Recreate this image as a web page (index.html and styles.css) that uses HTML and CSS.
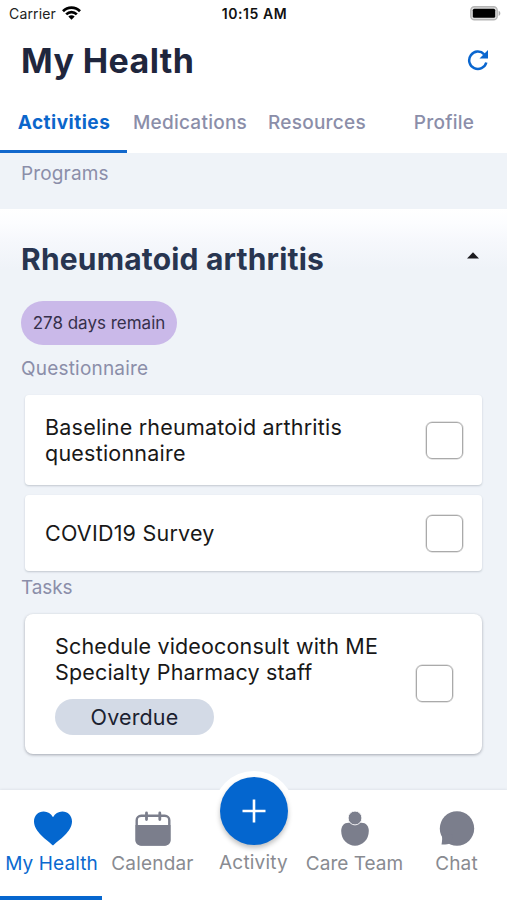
FILE: index.html
```html
<!DOCTYPE html>
<html lang="en">
<head>
<meta charset="utf-8">
<title>My Health</title>
<link rel="stylesheet" href="styles.css">
</head>
<body>
<div class="app">
  <div class="status">
    <div class="carrier"><span>Carrier</span>
      <svg width="19" height="14" viewBox="0 0 19 14" fill="none" stroke="#000" stroke-width="2.7"><path d="M1 5.200C5.800.3 13.200.3 18 5.200M4.200 8.400c3-3 7.600-3 10.600 0"/><path d="M6.300 10.600c1.800-1.700 4.600-1.700 6.400 0L9.500 13.700z" fill="#000" stroke="none"/></svg>
    </div>
    <span class="time">10:15 AM</span>
    <svg class="battery" width="31" height="15" viewBox="0 0 31 15"><rect x=".8" y=".8" width="26.400" height="13" rx="3.600" fill="#ddd" stroke="#b5b5b5" stroke-width="1.400"/><path d="M28.600 4.800c2.300 1 2.300 4.200 0 5.200z" fill="#aaa"/><rect x="2.800" y="2.800" width="22.400" height="9" rx="1.500"/></svg>
  </div>
  <header class="header">
    <h1>My Health</h1>
    <svg width="22" height="22" viewBox="0 0 22 22"><path d="M17.200 5.300A8.700 8.700 0 1 0 19.300 13.500" fill="none" stroke="#0a66cf" stroke-width="2.500"/><path d="M21 1v8.500h-8.500z" fill="#0a66cf"/></svg>
  </header>
  <nav class="tabs">
    <a class="tab active"><span>Activities</span></a>
    <a class="tab"><span>Medications</span></a>
    <a class="tab"><span>Resources</span></a>
    <a class="tab"><span>Profile</span></a>
  </nav>
  <main class="content">
    <div class="programs"><span>Programs</span></div>
    <section class="program">
      <div class="program-head">
        <h2>Rheumatoid arthritis</h2>
        <svg width="12" height="7" viewBox="0 0 12 7"><path d="M0 6.500 6 .3l6 6.200z" fill="#1c1b20"/></svg>
      </div>
      <div class="remain"><span>278 days remain</span></div>
      <h3 class="label questionnaire">Questionnaire</h3>
      <div class="card first"><p>Baseline rheumatoid arthritis<br>questionnaire</p><i class="check"></i></div>
      <div class="card second"><p>COVID19 Survey</p><i class="check"></i></div>
      <h3 class="label tasks">Tasks</h3>
      <div class="card task">
        <div><p>Schedule videoconsult with ME<br>Specialty Pharmacy staff</p><div class="overdue"><span>Overdue</span></div></div>
        <i class="check"></i>
      </div>
    </section>
  </main>
  <nav class="bottom">
    <a class="item active">
      <svg width="38" height="35" viewBox="0 0 38 35"><path d="M19 34.500C13 29 0 20.500 0 10.500 0 4.500 4.200.5 9.700.5c4 0 7.300 2.300 9.300 5.700C21 2.800 24.300.5 28.300.5 33.800.5 38 4.500 38 10.500c0 10-13 18.500-19 24z" fill="#0467cf"/></svg>
      <span>My Health</span>
    </a>
    <a class="item">
      <svg width="36" height="35" viewBox="0 0 36 35"><rect x="1.700" y="4.700" width="32.600" height="28.800" rx="4.500" fill="#fff" stroke="#7b7e8c" stroke-width="2.400"/><path d="M.5 14h35v15.500a5 5 0 0 1-5 5h-25a5 5 0 0 1-5-5z" fill="#7b7e8c"/><path d="M11.500 2v6.500M24.800 2v6.500" stroke="#7b7e8c" stroke-width="2.800" stroke-linecap="round"/></svg>
      <span>Calendar</span>
    </a>
    <a class="item add">
      <div class="halo"></div>
      <div class="fab"><svg width="24" height="24" viewBox="0 0 24 24"><path d="M12 .5v23M.5 12h23" stroke="#fff" stroke-width="2.600"/></svg></div>
      <span>Activity</span>
    </a>
    <a class="item care">
      <svg width="28" height="35" viewBox="0 0 28 35" fill="#7b7e8c"><path d="M7.500 11.800C3 11.800.2 15.300.2 20 .2 28.500 6.500 34.700 14 34.700S27.800 28.500 27.800 20c0-4.700-2.800-8.200-7.300-8.200z"/><circle cx="14" cy="7" r="6.900" stroke="#fff" stroke-width=".9"/></svg>
      <span>Care Team</span>
    </a>
    <a class="item">
      <svg width="36" height="35" viewBox="0 0 36 35"><circle cx="18" cy="17.500" r="17.200" fill="#7b7e8c"/><path d="M2.700 23.500C3.500 26.500 3.200 30 2.500 33.500c4 .1 7-.3 9.500-1.500l2-8z" fill="#7b7e8c"/></svg>
      <span>Chat</span>
    </a>
  </nav>
</div>
</body>
</html>
```
FILE: styles.css
```css
* { box-sizing: border-box; }
body { margin: 0; font-family: Inter, "Liberation Sans", sans-serif; }
h1, h2, h3, p { margin: 0; }
svg { display: block; flex: none; }
span, p, h1, h2, h3 { white-space: nowrap; }
.app { width: 507px; height: 900px; background: #fff; display: flex; flex-direction: column; overflow: hidden; }

.status { height: 28px; display: grid; grid-template-columns: 1fr auto 1fr; align-items: center; padding: 0 6px 1px 9px; font-size: 14px; color: #222; }
.carrier { display: flex; align-items: center; gap: 6px; letter-spacing: .15px; }
.carrier svg { margin-top: -1px; }
.time { font-weight: 600; font-size: 14px; letter-spacing: .55px; color: #111; margin-right: 1px; }
.battery { justify-self: end; margin-top: -1px; }

.header { height: 64px; display: flex; align-items: center; justify-content: space-between; padding: 2px 18px 0 21px; }
.header svg { margin-top: -3px; }
h1 { font-size: 34px; line-height: 40px; font-weight: 650; letter-spacing: .4px; color: #1f263d; }

.tabs { height: 61px; flex: none; display: grid; grid-template-columns: 127px 126px 128px 126px; }
.tab { display: flex; align-items: center; justify-content: center; padding: 3px 0 0 0; border-bottom: 3px solid transparent; font-size: 19px; font-weight: 500; color: #8b8ea9; letter-spacing: .25px; }
.tab.active { padding-left: 1px; color: #0b66cb; border-color: #1268cc; font-weight: 650; letter-spacing: .5px; }

.content { height: 637px; flex: none; background: #eff3f8; }
.programs { height: 56px; padding: 9px 21px; font-size: 19px; line-height: 24px; color: #8b8ea9; letter-spacing: .15px; }
.program { height: 581px; background: linear-gradient(#fff 0, #fcfdff 14px, #f6f8fc 32px, #eff3f8 60px); display: flex; flex-direction: column; padding: 0 25px 0 21px; }
.program-head { height: 92px; display: flex; align-items: center; justify-content: space-between; padding: 7px 3px 0 0; }
.program-head svg { margin-top: -6px; }
h2 { font-size: 30px; line-height: 36px; font-weight: 650; color: #283550; letter-spacing: .18px; }
.remain { width: 156px; height: 44px; border-radius: 22px; background: #cab9e9; color: #36304b; display: flex; align-items: center; justify-content: center; font-size: 17px; letter-spacing: 0; }
.label { font-size: 19px; line-height: 24px; font-weight: 400; color: #8b8ea9; letter-spacing: .2px; }
.questionnaire { margin-top: 12px; }
.tasks { margin-top: 5px; letter-spacing: -.1px; }
.card { margin-left: 4px; width: 457px; background: #fff; border-radius: 4px; box-shadow: 0 1px 2px rgba(60, 70, 90, .25); display: flex; justify-content: space-between; color: #181818; font-size: 21.500px; line-height: 26px; letter-spacing: .22px; }
.first { height: 90px; margin-top: 14px; padding: 19px 19px 0 20px; }
.first .check { margin-top: 8px; }
.second { height: 76px; margin-top: 10px; padding: 0 19px 0 20px; align-items: center; }
.task { height: 140px; margin-top: 14px; padding: 19px 29px 0 30px; border-radius: 8px; box-shadow: 0 1px 3px rgba(50, 55, 70, .4); letter-spacing: .16px; }
.task .check { margin-top: 32px; }
.check { width: 37px; height: 37px; flex: none; border: 1px solid #aaa; box-shadow: 0 0 0 .5px #ccc; border-radius: 6px; }
.overdue { width: 159px; height: 36px; margin-top: 14px; border-radius: 18px; background: #d3dae6; display: flex; align-items: center; justify-content: center; color: #1b2130; }

.bottom { position: relative; height: 110px; flex: none; display: grid; grid-template-columns: 102px 101px 101px 102px 101px; background: #fff; box-shadow: 0 -1px 2px rgba(100, 110, 130, .1); }
.item { display: flex; flex-direction: column; align-items: center; padding-top: 21px; font-size: 19px; line-height: 24px; color: #898b91; letter-spacing: .18px; }
.item > span { margin-top: 6px; }
.item.active { color: #0a69cf; padding-left: 4px; border-bottom: 4px solid #0667cf; letter-spacing: .1px; }
.item.active > span { margin-left: -3px; }
.item.add { position: relative; padding-top: 55px; letter-spacing: .2px; }
.item.care { padding-right: 1px; letter-spacing: .02px; }
.halo { position: absolute; top: -19px; left: 10px; width: 82px; height: 82px; border-radius: 50%; background: #fff; }
.fab { position: absolute; top: -13px; left: 17px; width: 68px; height: 68px; border-radius: 50%; background: #0466cf; box-shadow: 0 3px 5px rgba(0, 0, 0, .25); display: flex; align-items: center; justify-content: center; }
```
